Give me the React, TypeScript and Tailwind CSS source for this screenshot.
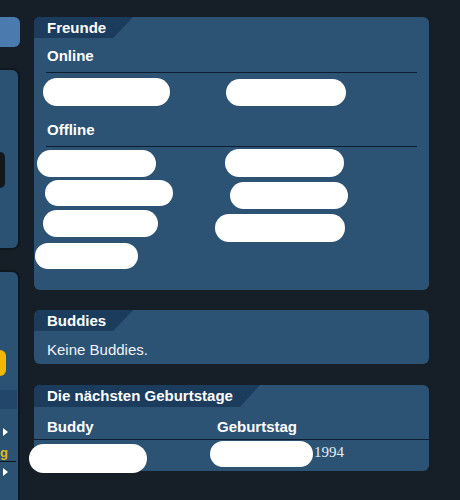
import React from "react";

function Tab({ title }: { title: string }) {
  return (
    <div className="flex">
      <div className="h-[21px] rounded-tl-md bg-[#1b3c5d] pl-[13px] pr-[27px] text-[15px] font-bold leading-[21px] text-white [clip-path:polygon(0_0,100%_0,calc(100%-20px)_100%,0_100%)]">
        {title}
      </div>
    </div>
  );
}

function Sidebar() {
  return (
    <div className="flex w-[20px] shrink-0 flex-col">
      <div className="mt-[17px] h-[30px] shrink-0 rounded-r-md bg-[#4b7aae]" />
      <div className="mt-[21px] flex h-[182px] shrink-0 flex-col rounded-r-lg border-2 border-l-0 border-[#0f171f] bg-[#2b5272]">
        <div className="mt-[82px] h-[36px] w-[5px] rounded-r-full bg-[#111820]" />
      </div>
      <div className="mt-[20px] flex h-[230px] shrink-0 flex-col rounded-tr-lg border-2 border-l-0 border-b-0 border-[#0f171f] bg-[#2b5272]">
        <div className="mt-[78px] h-[26px] w-[6px] rounded-r-full bg-[#f2b705]" />
        <div className="mt-[14px] h-[19px] w-[17px] bg-[#22456a]" />
        <div className="mt-[19px] ml-[3px] h-0 w-0 border-y-[4px] border-l-[5px] border-y-transparent border-l-white" />
        <div className="mt-[11px] h-[15px] w-[16px] border-b border-[#0c141c] text-[13px] font-bold leading-[12px] text-[#e5b520]">
          g
        </div>
        <div className="mt-[6px] ml-[3px] h-0 w-0 border-y-[4px] border-l-[5px] border-y-transparent border-l-white" />
      </div>
    </div>
  );
}

export default function App() {
  return (
    <div className="flex h-[500px] w-[460px] gap-[14px] overflow-hidden bg-[#161e27] font-['Liberation_Sans',Arial,sans-serif] text-[15px] text-white">
      <Sidebar />
      <div className="flex w-[395px] shrink-0 flex-col pt-[17px]">
        {/* Freunde */}
        <div className="h-[273px] shrink-0 rounded-md bg-[#2c5374]">
          <Tab title="Freunde" />
          <div className="mx-[12px] mt-[8px] border-b border-[#0d1e30] pb-[6px] pl-px font-bold leading-[20px]">
            Online
          </div>
          <div className="flex h-[34px] items-start pt-[5px]">
            <div className="ml-[9px] h-[28px] w-[127px] rounded-full bg-white" />
            <div className="ml-[56px] mt-px h-[27px] w-[120px] rounded-full bg-white" />
          </div>
          <div className="mx-[12px] mt-[13px] border-b border-[#0d1e30] pb-[6px] pl-px font-bold leading-[20px]">
            Offline
          </div>
          <div className="flex h-[32px] items-start">
            <div className="ml-[3px] mt-[3px] h-[27px] w-[119px] rounded-full bg-white" />
            <div className="ml-[69px] mt-[2px] h-[28px] w-[119px] rounded-full bg-white" />
          </div>
          <div className="flex h-[31px] items-start">
            <div className="ml-[11px] mt-px h-[26px] w-[128px] rounded-full bg-white" />
            <div className="ml-[57px] mt-[3px] h-[27px] w-[118px] rounded-full bg-white" />
          </div>
          <div className="flex h-[33px] items-start">
            <div className="ml-[9px] h-[27px] w-[115px] rounded-full bg-white" />
            <div className="ml-[57px] mt-[4px] h-[28px] w-[130px] rounded-full bg-white" />
          </div>
          <div className="flex h-[26px] items-start">
            <div className="ml-px h-[26px] w-[103px] rounded-full bg-white" />
          </div>
        </div>

        {/* Buddies */}
        <div className="mt-[20px] h-[54px] shrink-0 rounded-md bg-[#2c5374]">
          <Tab title="Buddies" />
          <div className="mt-[9px] pl-[13px] leading-[20px] text-[#eef2f6]">Keine Buddies.</div>
        </div>

        {/* Geburtstage */}
        <div className="mt-[21px] h-[86px] shrink-0 rounded-md bg-[#2c5374]">
          <div className="flex">
            <div className="h-[22px] rounded-tl-md bg-[#1b3c5d] pl-[13px] pr-[27px] text-[15px] font-bold leading-[22px] text-white [clip-path:polygon(0_0,100%_0,calc(100%-20px)_100%,0_100%)]">
              Die nächsten Geburtstage
            </div>
          </div>
          <div className="grid grid-cols-[183px_1fr] border-b border-[#0d1e30] pb-[2px] pt-[10px] font-bold leading-[20px]">
            <div className="pl-[13px]">Buddy</div>
            <div>Geburtstag</div>
          </div>
          <div className="flex h-[31px] items-start">
            <div className="-ml-[5px] mt-[4px] h-[29px] w-[118px] rounded-full bg-white" />
            <div className="ml-[63px] mt-px h-[26px] w-[103px] rounded-full bg-white" />
            <div className="ml-px font-['Liberation_Serif',serif] text-[15px] leading-[24px] text-[#e8edf2]">
              1994
            </div>
          </div>
        </div>
      </div>
    </div>
  );
}
